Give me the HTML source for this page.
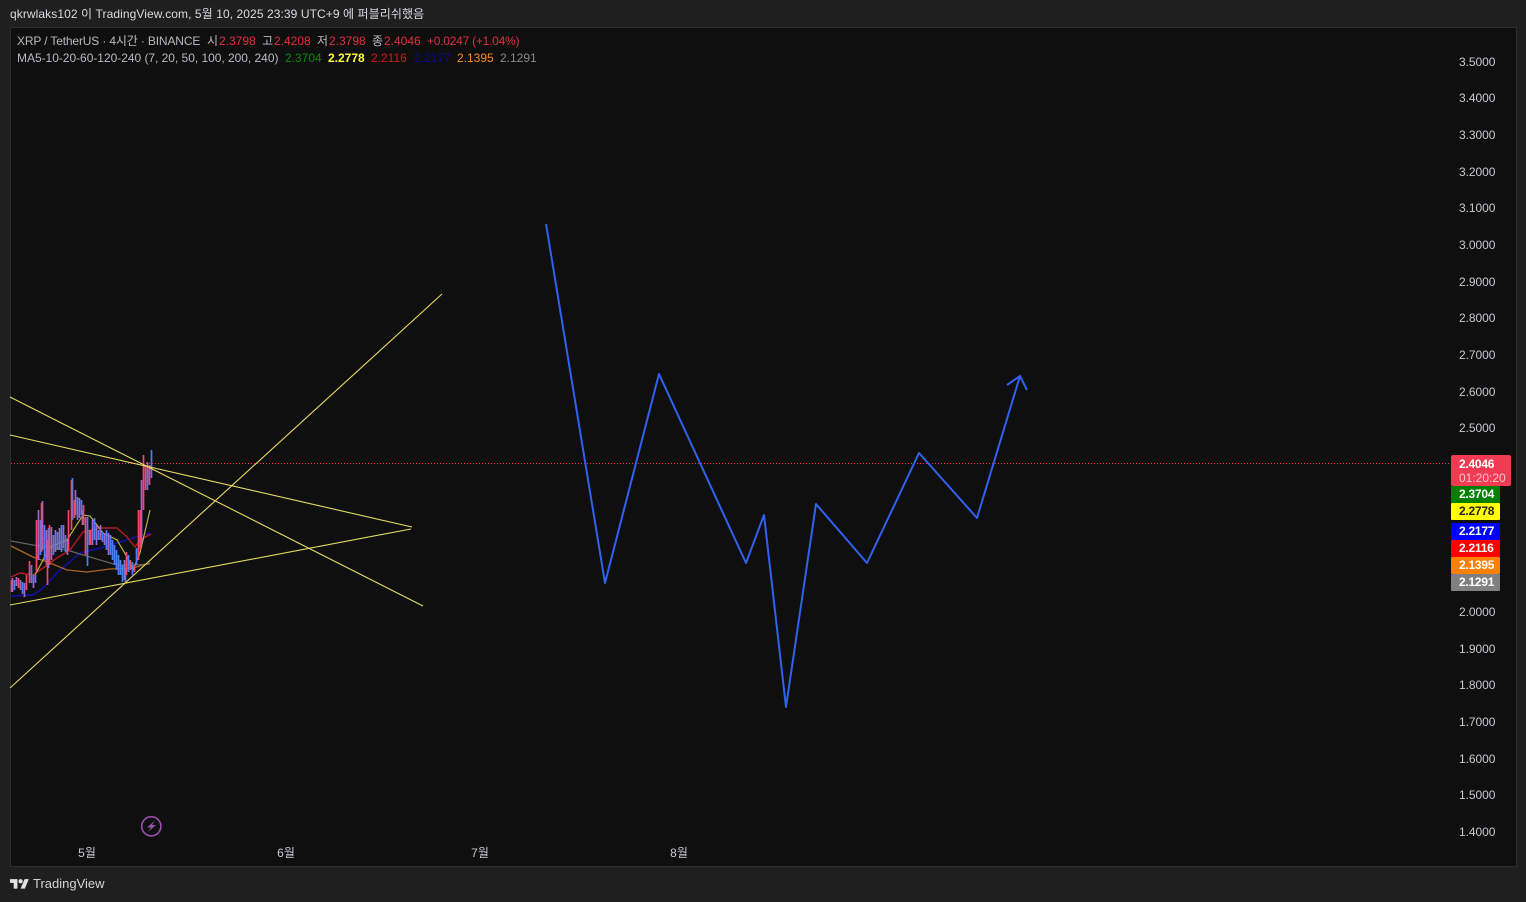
<!DOCTYPE html>
<html><head><meta charset="utf-8">
<style>
html,body{margin:0;padding:0;width:1526px;height:902px;overflow:hidden;background:#1f1f1f}
body{font-family:"Liberation Sans","Noto Sans CJK KR",sans-serif;font-size:12px;color:#d1d4dc;position:relative}
#chart{position:absolute;left:10px;top:27px;width:1505px;height:838px;background:#0f0f0f;border:1px solid #2e2e2e}
.t{position:absolute;white-space:nowrap;line-height:14px}
.h{color:#b8bac0;top:34px}
.r{color:#e0303f;top:34px}
.a{position:absolute;left:1459px;margin-top:1px;line-height:14px;color:#c8cad0;letter-spacing:-.05px}
.m{position:absolute;top:846px;line-height:14px;color:#c8cad0;transform:translateX(-50%)}
.l{position:absolute;left:1451px;width:41px;padding-left:8px;height:17px;line-height:17px;color:#fff;font-weight:bold;border-radius:1px;letter-spacing:-.25px}
svg{position:absolute;left:0;top:0}
</style></head><body>
<div id="chart"></div>
<svg width="1526" height="902" viewBox="0 0 1526 902" fill="none">
<path d="M11 463.5H1450" stroke="#f03a4c" stroke-width="1" stroke-dasharray="1 2"/>
<path stroke="#10109a" stroke-width="1.7" d="M11 596L33 595L43 588L58 572L80 553L100 548L117 543L133 538L150 533"/>
<path stroke="#a8661f" stroke-width="1.3" d="M11 546L33 557L50 563L67 570L87 572L110 569L133 568L150 563"/>
<path stroke="#626262" stroke-width="1.3" d="M11 541L33 545L67 550L83 555L100 560L117 565L133 565L150 564"/>
<path stroke="#b01f1f" stroke-width="1.4" d="M11 577L20 573L33 575L43 568L57 558L70 550L83 532L100 528L117 528L127 537L135 547L140 540L151 534"/>
<path stroke="#0b6b0b" stroke-width="1.1" d="M36 570L39 545L46 535M139 548L141 510"/>
<path stroke="#b9b23a" stroke-width="1.2" d="M35 575L50 547L67 540L83 515L90 516L103 533L117 540L127 557L133 570L140 553L150 510"/>
<path stroke="#a066c8" stroke-width="1.700" d="M12.500 578V592M16.500 577V586M20.500 580V590M24.500 583V597M33.500 575V588M38.500 510V560M42.500 501V550M46.500 530V565M51.500 527V560M55.500 530V552M59.500 528V550M63.500 525V548M67.500 540V555M75.500 490V515M79.500 498V518M82.500 510V525M89.500 530V545M92.500 520V545M96.500 525V545M100.500 525V540M104.500 533V545M108.500 533V555M124.500 560V580M141.500 480V545M147.500 462V482"/>
<path stroke="#4a80f5" stroke-width="1.700" d="M14.500 580V590M22.500 582V594M31.500 565V583M35.500 575V583M40.500 520V555M44.500 525V560M48.500 528V568M53.500 535V555M57.500 532V550M61.500 525V552M65.500 535V552M72.500 478V520M77.500 497V520M81.500 500V515M87.500 517V566M94.500 518V540M98.500 530V540M102.500 532V542M106.500 530V550M110.500 535V555M112.500 540V560M114.500 545V565M116.500 550V570M118.500 555V575M120.500 560V575M122.500 565V582M125.500 568V582M128.500 555V572M132.500 562V575M136.500 548V565M147.500 470V490M151.500 450V478"/>
<path stroke="#f0486a" stroke-width="1.700" d="M11.500 580V592M18.500 578V588M26.500 575V590M29.500 561V583M36.500 520V572M41.500 503V552M47.500 540V585M49.500 525V565M68.500 510V550M71.500 480V530M74.500 500V518M83.500 505V525M85.500 517V555M90.500 530V545M126.500 552V575M130.500 560V570M134.500 565V572M138.500 510V560M140.500 510V550M143.500 455V510M145.500 465V490M149.500 465V485"/>
<g stroke="#e6da60" stroke-width="1.1">
<path d="M10 397L423 606"/><path d="M10 435L412 527"/><path d="M10 605L411 529"/><path d="M10 688L442 294"/>
</g>
<path stroke="#2f62ee" stroke-width="2" stroke-linejoin="round" d="M546 224L605 583L659 374L746 563L764 515L786 707L816 504L867 563L919 453L977 518L1020 376"/>
<path stroke="#2f62ee" stroke-width="2" d="M1007 385L1020 376L1027 390"/>
<circle cx="151.300" cy="826.300" r="9.600" stroke="#9a4fb0" stroke-width="1.600"/>
<path fill="#9a4fb0" d="M155 820.500L147 827.500H151L148 832L156 825H152Z"/>
<g transform="translate(10 877) scale(.53)" fill="#e2e2e2"><path d="M14 22H7V11H0V4h14v18zM28 22h-8l7.500-18h8L28 22z"/><circle cx="20" cy="8" r="4"/></g>
</svg>
<div class="t" style="left:10px;top:7px;color:#d8dadf;letter-spacing:.08px">qkrwlaks102 이 TradingView.com, 5월 10, 2025 23:39 UTC+9 에 퍼블리쉬했음</div>
<div class="t h" style="left:17px;letter-spacing:-.15px">XRP / TetherUS · 4시간 · BINANCE</div>
<div class="t h" style="left:207px">시</div><div class="t r" style="left:219px">2.3798</div>
<div class="t h" style="left:262px">고</div><div class="t r" style="left:274px">2.4208</div>
<div class="t h" style="left:317px">저</div><div class="t r" style="left:329px">2.3798</div>
<div class="t h" style="left:372px">종</div><div class="t r" style="left:384px">2.4046</div>
<div class="t r" style="left:427px;letter-spacing:-.24px">+0.0247 (+1.04%)</div>
<div class="t" style="left:17px;top:51px;color:#b8bac0;letter-spacing:-.03px">MA5-10-20-60-120-240 (7, 20, 50, 100, 200, 240)</div>
<div class="t" style="left:285px;top:51px;color:#0a8a0a">2.3704</div>
<div class="t" style="left:328px;top:51px;color:#ffff33;font-weight:bold">2.2778</div>
<div class="t" style="left:371px;top:51px;color:#d81818">2.2116</div>
<div class="t" style="left:414px;top:51px;color:#0a0a9a">2.2177</div>
<div class="t" style="left:457px;top:51px;color:#ff8c1a">2.1395</div>
<div class="t" style="left:500px;top:51px;color:#8a8a8a">2.1291</div>
<div class="a" style="top:54px">3.5000</div><div class="a" style="top:90px">3.4000</div><div class="a" style="top:127px">3.3000</div><div class="a" style="top:164px">3.2000</div><div class="a" style="top:200px">3.1000</div><div class="a" style="top:237px">3.0000</div><div class="a" style="top:274px">2.9000</div><div class="a" style="top:310px">2.8000</div><div class="a" style="top:347px">2.7000</div><div class="a" style="top:384px">2.6000</div><div class="a" style="top:420px">2.5000</div><div class="a" style="top:604px">2.0000</div><div class="a" style="top:641px">1.9000</div><div class="a" style="top:677px">1.8000</div><div class="a" style="top:714px">1.7000</div><div class="a" style="top:751px">1.6000</div><div class="a" style="top:787px">1.5000</div><div class="a" style="top:824px">1.4000</div>
<div style="position:absolute;left:1451px;top:455px;width:60px;height:31px;background:#f23b52;border-radius:2px"></div>
<div class="t" style="left:1459px;top:457px;color:#fff;font-weight:bold;letter-spacing:-.25px">2.4046</div>
<div class="t" style="left:1459px;top:471px;color:#fbc4cc">01:20:20</div>
<div class="l" style="top:486px;background:#008000">2.3704</div>
<div class="l" style="top:503px;background:#ffff00;color:#222">2.2778</div>
<div class="l" style="top:523px;background:#0000ff">2.2177</div>
<div class="l" style="top:540px;background:#ff0000">2.2116</div>
<div class="l" style="top:557px;background:#ff8000">2.1395</div>
<div class="l" style="top:574px;background:#808080">2.1291</div>
<div class="m" style="left:87px">5월</div><div class="m" style="left:286px">6월</div><div class="m" style="left:480px">7월</div><div class="m" style="left:679px">8월</div>
<div class="t" style="left:33px;top:877px;font-size:13px;color:#d4d4d4">TradingView</div>
</body></html>
